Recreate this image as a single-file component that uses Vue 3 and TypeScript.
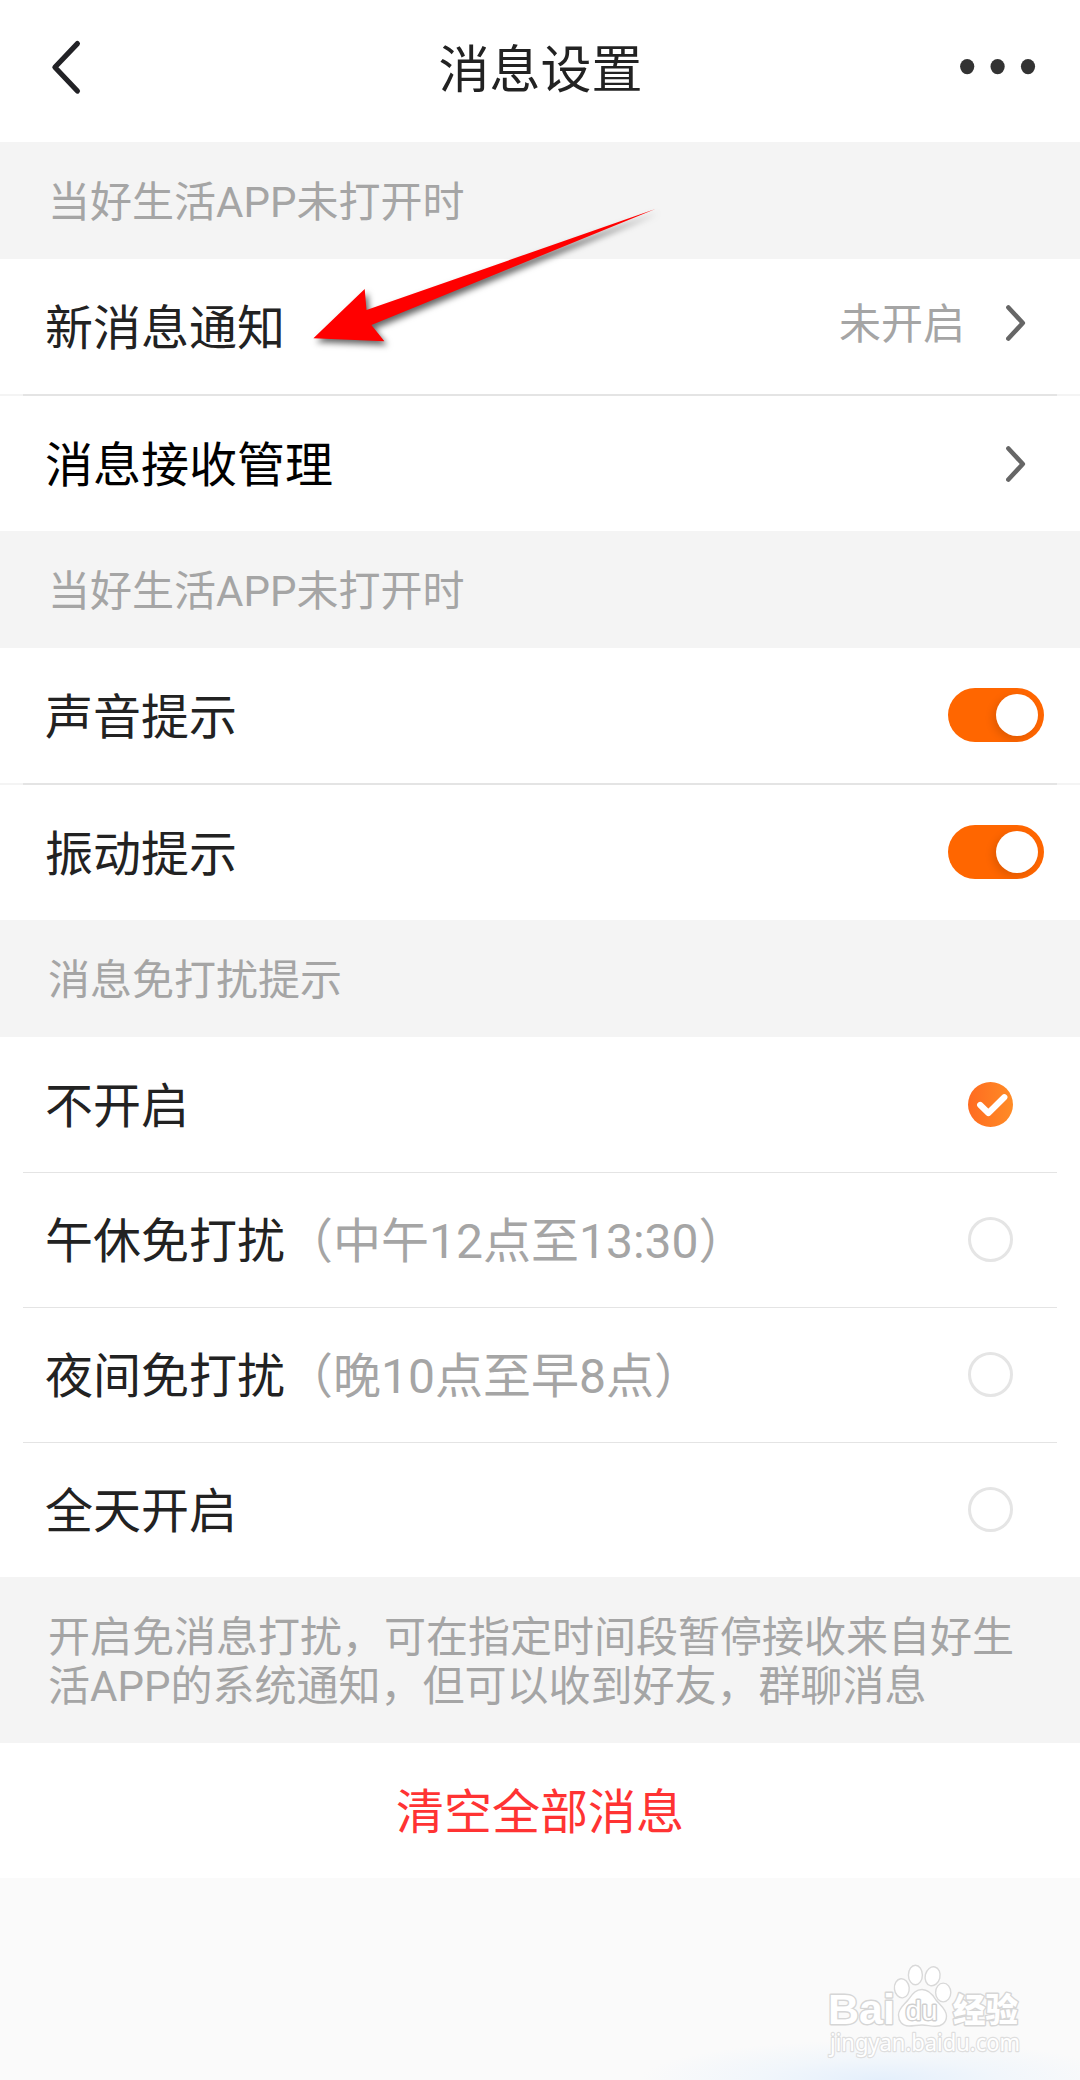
<script setup lang="ts">
import { ref } from 'vue'

interface Toggle {
  label: string
  on: boolean
}

interface QuietOption {
  label: string
  note?: string
}

const toggles = ref<Toggle[]>([
  { label: '声音提示', on: true },
  { label: '振动提示', on: true },
])

const quietOptions: QuietOption[] = [
  { label: '不开启' },
  { label: '午休免打扰', note: '（中午12点至13:30）' },
  { label: '夜间免打扰', note: '（晚10点至早8点）' },
  { label: '全天开启' },
]

const selected = ref(0)
</script>

<template>
  <div class="page">
    <header class="header">
      <svg class="back" width="32" height="56" viewBox="0 0 32 56">
        <path d="M27.4 4.6 L4.9 28.3 L27.4 52" fill="none" stroke="#222226" stroke-width="5.2" stroke-linecap="round" stroke-linejoin="round" />
      </svg>
      <h1 class="title">消息设置</h1>
      <svg class="more" width="76" height="16" viewBox="0 0 76 16">
        <ellipse cx="7.2" cy="7.6" rx="7.1" ry="7.6" />
        <ellipse cx="37.6" cy="7.6" rx="7.1" ry="7.6" />
        <ellipse cx="68" cy="7.6" rx="7.1" ry="7.6" />
      </svg>
    </header>

    <p class="caption">当好生活APP未打开时</p>
    <section class="group">
      <div class="row">
        <span class="label">新消息通知</span>
        <span class="value">未开启</span>
        <svg class="chevron raised" width="20" height="36" viewBox="0 0 20 36">
          <path d="M2.4 2.5 L16.8 18 L2.4 33.5" />
        </svg>
      </div>
      <div class="divider"></div>
      <div class="row">
        <span class="label dark">消息接收管理</span>
        <svg class="chevron" width="20" height="36" viewBox="0 0 20 36">
          <path d="M2.4 2.5 L16.8 18 L2.4 33.5" />
        </svg>
      </div>
    </section>

    <p class="caption">当好生活APP未打开时</p>
    <section class="group">
      <template v-for="(item, i) in toggles" :key="item.label">
        <div v-if="i > 0" class="divider"></div>
        <div class="row">
          <span class="label">{{ item.label }}</span>
          <button class="switch" :class="{ on: item.on }" @click="item.on = !item.on"><i class="knob"></i></button>
        </div>
      </template>
    </section>

    <p class="caption">消息免打扰提示</p>
    <section class="options">
      <div v-for="(opt, i) in quietOptions" :key="opt.label" class="option" @click="selected = i">
        <span class="label">{{ opt.label }}</span>
        <span v-if="opt.note" class="note">{{ opt.note }}</span>
        <svg v-if="selected === i" class="mark" width="45" height="45" viewBox="0 0 45 45">
          <defs>
            <linearGradient id="tick" x1="0" y1="0" x2="1" y2="0">
              <stop offset="0" stop-color="#ff6b20" />
              <stop offset="1" stop-color="#ff8c26" />
            </linearGradient>
          </defs>
          <circle cx="22.5" cy="22.5" r="22.5" fill="url(#tick)" />
          <path d="M12.2 23 L20.4 31 L36.3 15.2" fill="none" stroke="#fff" stroke-width="6.2" stroke-linecap="round" stroke-linejoin="round" />
        </svg>
        <i v-else class="mark ring"></i>
      </div>
    </section>

    <p class="caption">开启免消息打扰，可在指定时间段暂停接收来自好生活APP的系统通知，但可以收到好友，群聊消息</p>
    <button class="clear">清空全部消息</button>

    <div class="rest"></div>

    <svg class="arrow" width="370" height="160" viewBox="300 200 370 160">
      <path d="M313.4 338.3 L364.7 289 L366.5 310 L655.4 209 L371.4 325 L384.4 341.3 Z" fill="#ff0000" />
    </svg>

    <svg class="watermark" width="230" height="115" viewBox="815 1960 230 115">
      <g fill="#fff" stroke="#d9d9d9" stroke-width="1.4">
        <ellipse cx="901.8" cy="1988.3" rx="7.4" ry="9.6" transform="rotate(-6 901.8 1988.3)" />
        <ellipse cx="915.4" cy="1975" rx="7" ry="9.8" />
        <ellipse cx="932.6" cy="1976.3" rx="7.4" ry="9.6" transform="rotate(14 932.6 1976.3)" />
        <ellipse cx="943.2" cy="1992.5" rx="7.6" ry="9.4" />
        <path d="M922 1989.5 C929 1989.5 933 1995 936 2000 C940 2005 946.5 2009 946.5 2016 C946.5 2023 941 2026.5 935 2026.3 C930 2026.3 927 2025 922 2025 C917 2025 914 2026 909 2026 C902 2026 898.5 2021 898.5 2015 C898.5 2008 904 2005 908 2000 C912 1995 915 1989.5 922 1989.5 Z" />
      </g>
      <g class="mark-text">
        <text class="bai" x="828" y="2024" font-size="43" font-weight="700" textLength="67" lengthAdjust="spacingAndGlyphs">Bai</text>
        <text class="du" x="905.5" y="2019.5" font-size="27" textLength="32" lengthAdjust="spacingAndGlyphs">du</text>
        <text class="cjk" x="953" y="2021.5" font-size="33" font-weight="900" textLength="65" lengthAdjust="spacingAndGlyphs">经验</text>
        <text class="url" x="830" y="2050.5" font-size="24" textLength="190" lengthAdjust="spacingAndGlyphs">jingyan.baidu.com</text>
      </g>
    </svg>
  </div>
</template>

<style>
body {
  margin: 0;
  background: #fafafa;
}
</style>

<style scoped>
.page {
  position: relative;
  display: flex;
  flex-direction: column;
  width: 1080px;
  height: 2080px;
  overflow: hidden;
  background: #fafafa;
  color: #222;
  font-family: Roboto, 'Noto Sans CJK SC', sans-serif;
}

.header {
  box-sizing: border-box;
  display: flex;
  align-items: center;
  justify-content: space-between;
  flex: none;
  height: 142px;
  padding: 0 44px 8px 50px;
  background: #fff;
}

.title {
  margin: 7px 0 0 39px;
  font-size: 51px;
  font-weight: 400;
  line-height: 60px;
}

.more {
  fill: #333;
}

.caption {
  flex: none;
  margin: 0;
  padding: 36px 48px 32px;
  background: #f4f4f4;
  color: #a5a5a5;
  font-size: 42px;
  line-height: 49px;
}

.group {
  flex: none;
  background: #fff;
}

.row,
.option {
  box-sizing: border-box;
  display: flex;
  align-items: center;
  height: 135px;
  padding-left: 45px;
  font-size: 48px;
  line-height: 56px;
}

.label,
.note {
  padding-top: 4px;
}

.divider {
  height: 2px;
  padding: 0 23px;
  background: #e4e4e4 content-box;
  box-shadow: inset 23px 0 #f4f4f4, inset -23px 0 #f4f4f4;
}

.label.dark {
  color: #000;
}

.value {
  margin: -4px 41px 0 auto;
  color: #a5a5a5;
  font-size: 42px;
  line-height: 49px;
}

.chevron {
  flex: none;
  margin: 0 54px 0 auto;
  fill: none;
  stroke: #666;
  stroke-width: 4.6;
  stroke-linecap: round;
  stroke-linejoin: round;
}

.chevron.raised {
  margin: -8px 54px 0 0;
}

.switch {
  box-sizing: border-box;
  display: flex;
  width: 96px;
  height: 54px;
  margin: -1px 36px 0 auto;
  padding: 6px;
  border: 0;
  border-radius: 27px;
  overflow: hidden;
  background: #ddd;
}

.switch.on {
  justify-content: flex-end;
  background: #ff6600;
}

.knob {
  width: 42px;
  height: 42px;
  border-radius: 50%;
  background: #fff;
  box-shadow: -3px 3px 8px rgba(0, 0, 0, 0.13);
}

.options {
  flex: none;
  background: #fff;
}

.option + .option {
  background: linear-gradient(#e4e4e4, #e4e4e4) 23px 0 / 1034px 1px no-repeat;
}

.note {
  color: #a5a5a5;
}

.mark {
  box-sizing: border-box;
  flex: none;
  width: 45px;
  height: 45px;
  margin: 0 67px 0 auto;
}

.ring {
  border: 3px solid #e5e5e5;
  border-radius: 50%;
}

.clear {
  flex: none;
  height: 135px;
  padding: 4px 0 0;
  border: 0;
  background: #fff;
  color: #ff3333;
  font-family: inherit;
  font-size: 48px;
  line-height: 56px;
}

.rest {
  flex: 1;
  background: radial-gradient(ellipse 240px 40px at 880px 100%, #e4effb 0%, #f1f6fb 50%, #fafafa 100%);
}

.arrow {
  position: absolute;
  left: 300px;
  top: 200px;
  filter: drop-shadow(3px 4px 3px rgba(0, 0, 0, 0.6));
}

.watermark {
  position: absolute;
  left: 815px;
  top: 1960px;
}

.mark-text {
  fill: #fff;
  stroke: #d6d6d6;
  stroke-width: 2.8px;
  stroke-linejoin: round;
  paint-order: stroke;
  font-family: 'Liberation Sans', sans-serif;
}

.du {
  stroke: #d0d0d0;
}

.cjk {
  font-family: 'Noto Sans CJK SC', sans-serif;
}

.url {
  font-family: 'Noto Sans', sans-serif;
  stroke-width: 2.4px;
  stroke: #dedede;
}
</style>
